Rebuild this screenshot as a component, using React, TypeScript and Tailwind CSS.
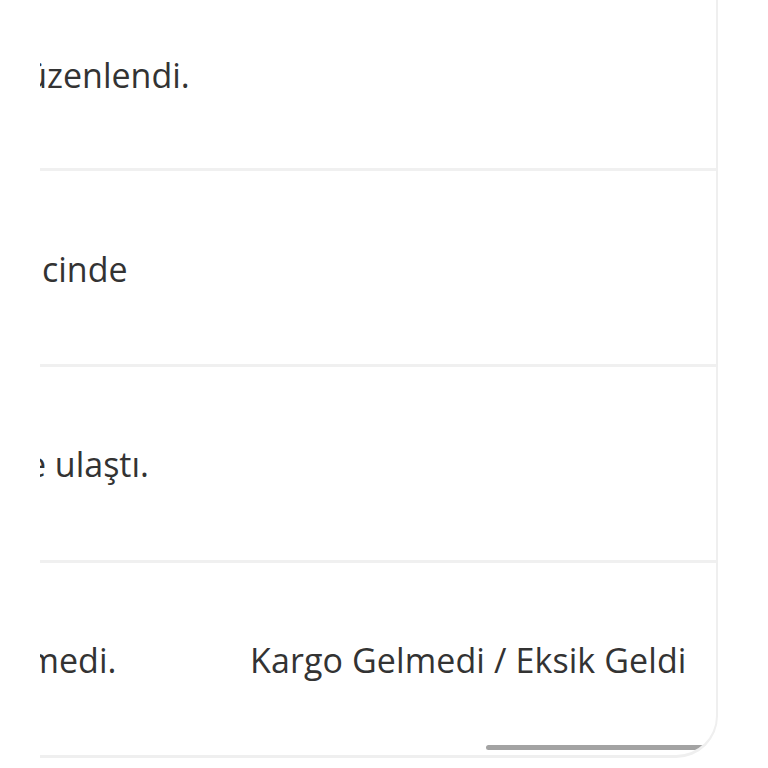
import React from 'react';

// partial glyph at the clipped left edge of the scrolled table
const Cut: React.FC<{ ch: string; w: string }> = ({ ch, w }) => (
  <span className={`inline-flex justify-end overflow-hidden ${w}`}>
    <span>{ch}</span>
  </span>
);

const App: React.FC = () => {
  return (
    <div
      className="w-[768px] h-[768px] bg-white overflow-hidden text-[#333333]"
      style={{ fontFamily: '"Open Sans", "Noto Sans", sans-serif' }}
    >
      <div className="relative ml-[40px] w-[678px] -mt-[25px] border-r-2 border-b-[3px] border-[#efefef] rounded-br-[42px] overflow-hidden text-[34px] leading-none">
        <div className="h-[196px] pt-[6px] flex items-center border-b-[3px] border-[#f0f0f0]">
          <div className="flex items-baseline whitespace-nowrap">
            <Cut ch="ü" w="w-[7px]" />
            <span>zenlendi.</span>
          </div>
        </div>
        <div className="h-[196px] pt-[2px] flex items-center border-b-[3px] border-[#f0f0f0]">
          <div className="pl-[2px] whitespace-nowrap">cinde</div>
        </div>
        <div className="h-[196px] flex items-center border-b-[3px] border-[#f0f0f0]">
          <div className="flex items-baseline whitespace-nowrap">
            <Cut ch="e" w="w-[6px]" />
            <span>&nbsp;ulaştı.</span>
          </div>
        </div>
        <div className="h-[192px] pt-[2px] flex items-center">
          <div className="w-[210px] flex items-baseline whitespace-nowrap">
            <Cut ch="m" w="w-[19px]" />
            <span>edi.</span>
          </div>
          <div className="whitespace-nowrap tracking-[0.1px]">Kargo Gelmedi / Eksik Geldi</div>
        </div>
        <div className="absolute bottom-[5px] right-[2px] w-[228px] h-[5px] rounded-full bg-[#a3a3a3]" />
      </div>
    </div>
  );
};

export default App;
